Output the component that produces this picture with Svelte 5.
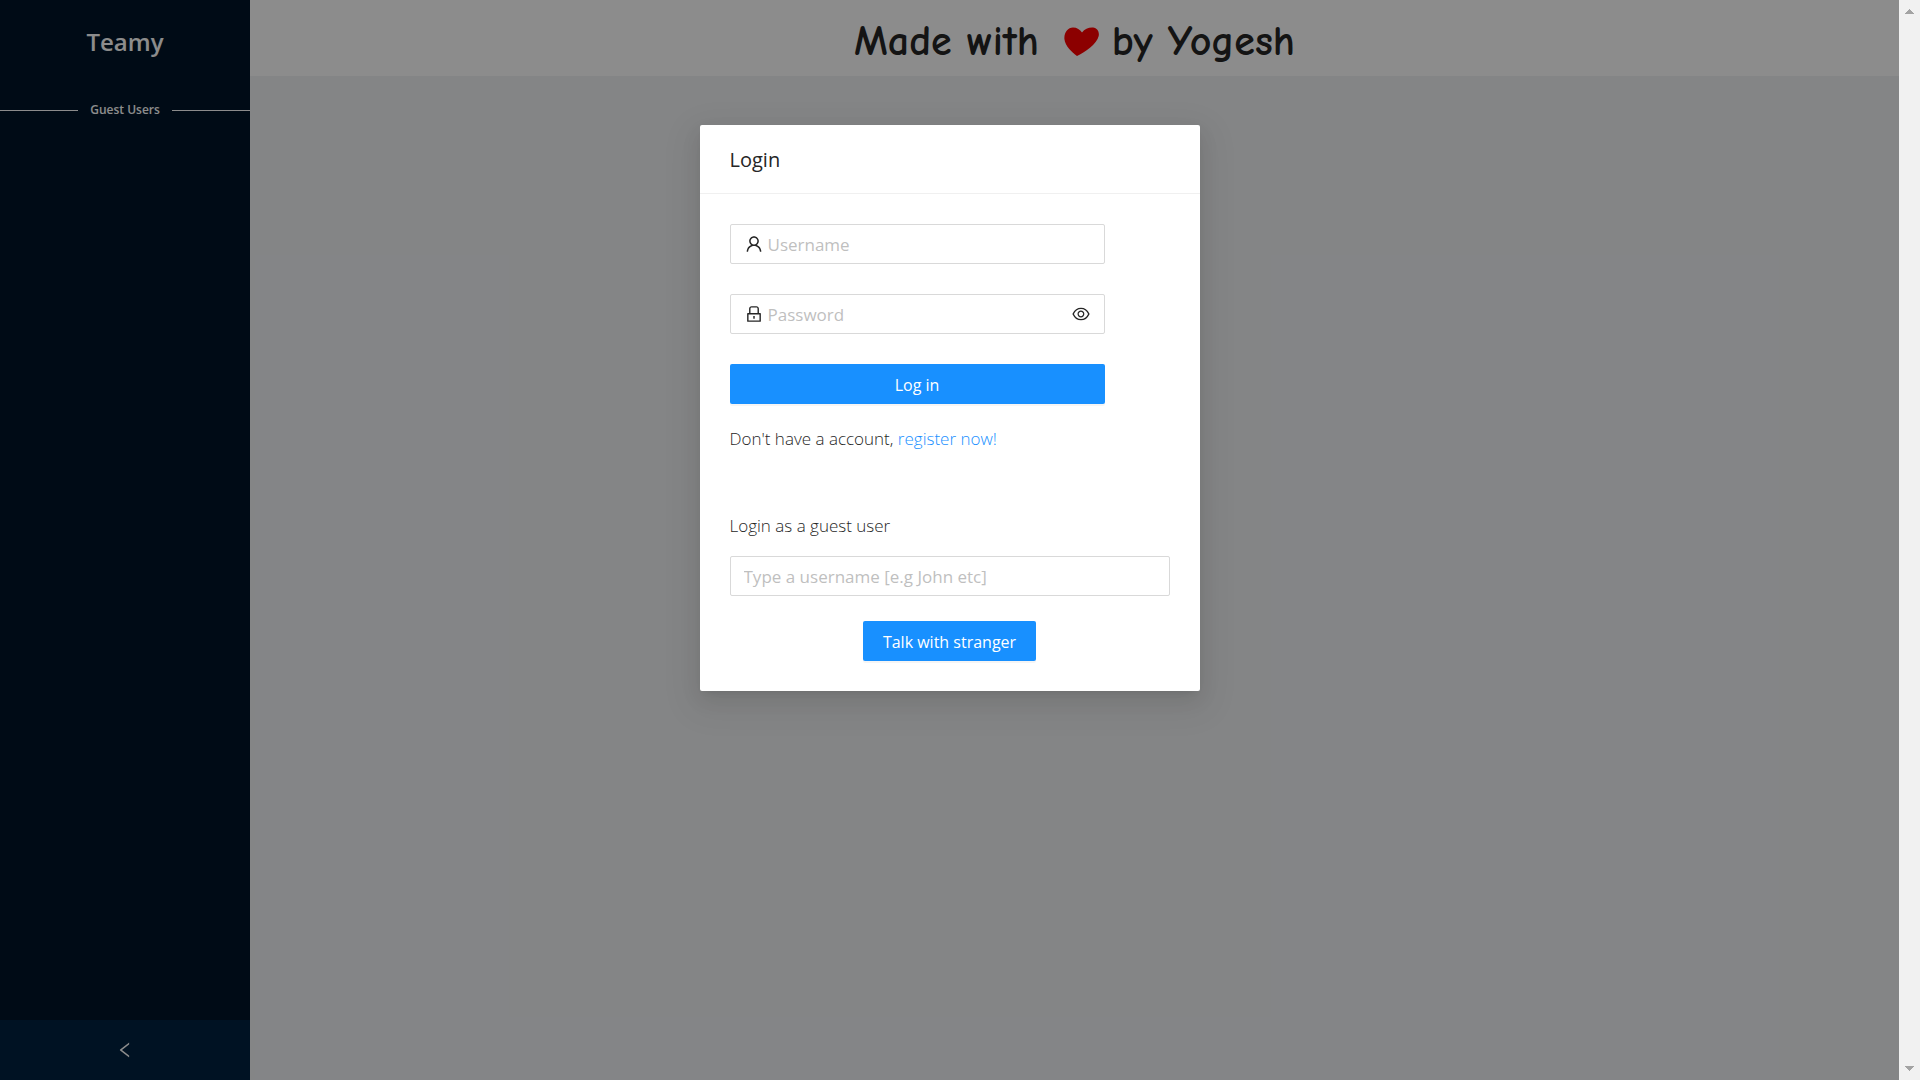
<script>
  let username = $state('');
  let password = $state('');
  let guest = $state('');
  let showPassword = $state(false);
</script>

<div class="screen">
  <div class="viewport">
    <aside class="sider">
      <h1 class="brand">Teamy</h1>
      <div class="divider"><span>Guest Users</span></div>
      <button class="trigger" type="button" aria-label="Collapse sidebar">
        <svg class="icon" viewBox="0 0 1024 1024" aria-hidden="true">
          <path d="M724 218.3V141c0-6.7-7.7-10.4-12.9-6.3L260.3 486.8a31.86 31.86 0 000 50.3l450.8 352.1c5.3 4.1 12.9.4 12.9-6.3v-77.3c0-4.9-2.3-9.6-6.1-12.6l-360-281 360-281.1c3.8-3 6.1-7.7 6.1-12.6z" />
        </svg>
      </button>
    </aside>
    <main class="content">
      <header class="topbar">
        <span>Made with</span>
        <svg class="heart" viewBox="0 0 35 29" aria-label="love" role="img">
          <path d="M13 29C8 25 1 19 .4 12C0 5 4 .6 9 .5C13 .5 16 2.500 18 5.500C20.500 2 25 .3 29 .6C33.500 1 35.500 5 34.700 9C33 17 20.500 25.500 13 29Z" />
        </svg>
        <span>by Yogesh</span>
      </header>
    </main>

    <div class="mask">
      <section class="modal" role="dialog" aria-labelledby="login-title">
        <h2 class="modal-title" id="login-title">Login</h2>
        <div class="modal-body">
          <form class="login">
            <label class="field">
              <svg class="icon" viewBox="0 0 1024 1024" aria-hidden="true">
                <path d="M858.5 763.6a374 374 0 00-80.6-119.5 375.63 375.63 0 00-119.5-80.6c-.4-.2-.8-.3-1.2-.5C719.5 518 760 444.7 760 362c0-137-111-248-248-248S264 225 264 362c0 82.7 40.5 156 102.8 201.1-.4.2-.8.3-1.2.5-44.8 18.9-85 46-119.5 80.6a375.63 375.63 0 00-80.6 119.5A371.7 371.7 0 00136 901.8a8 8 0 008 8.200h60c4.400 0 7.900-3.500 8-7.800 2-77.200 33-149.500 87.800-204.300 56.700-56.700 132-87.900 212.200-87.900s155.500 31.200 212.200 87.900C779 752.700 810 825 812 902.200c.1 4.400 3.600 7.800 8 7.800h60a8 8 0 008-8.200c-1-47.800-10.900-94.300-29.500-138.200zM512 534c-45.900 0-89.100-17.900-121.600-50.400S340 407.900 340 362c0-45.900 17.900-89.100 50.400-121.600S466.100 190 512 190s89.100 17.900 121.600 50.400S684 316.100 684 362c0 45.900-17.900 89.100-50.400 121.600S557.900 534 512 534z" />
              </svg>
              <input type="text" placeholder="Username" aria-label="Username" bind:value={username} />
            </label>
            <div class="field">
              <svg class="icon" viewBox="0 0 1024 1024" aria-hidden="true">
                <path d="M832 464h-68V240c0-70.7-57.3-128-128-128H388c-70.7 0-128 57.3-128 128v224h-68c-17.7 0-32 14.3-32 32v384c0 17.7 14.3 32 32 32h640c17.7 0 32-14.3 32-32V496c0-17.7-14.3-32-32-32zM332 240c0-30.9 25.1-56 56-56h248c30.9 0 56 25.1 56 56v224H332V240zm460 600H232V536h560v304zM484 701v53c0 4.4 3.6 8 8 8h40c4.4 0 8-3.6 8-8v-53a48.01 48.01 0 10-56 0z" />
              </svg>
              <input type={showPassword ? 'text' : 'password'} placeholder="Password" aria-label="Password" bind:value={password} />
              <button class="reveal" type="button" aria-label="Show password" onclick={() => (showPassword = !showPassword)}>
                <svg class="icon" viewBox="0 0 1024 1024" aria-hidden="true">
                  <path d="M942.2 486.2C847.4 286.5 704.1 186 512 186c-192.2 0-335.4 100.5-430.2 300.3a60.3 60.3 0 000 51.5C176.6 737.5 319.9 838 512 838c192.2 0 335.4-100.5 430.2-300.3 7.7-16.2 7.7-35 0-51.5zM512 766c-161.3 0-279.4-81.8-362.7-254C232.6 339.8 350.7 258 512 258c161.3 0 279.4 81.8 362.7 254C791.5 684.2 673.4 766 512 766zm-4-430c-97.2 0-176 78.8-176 176s78.8 176 176 176 176-78.8 176-176-78.8-176-176-176zm0 288c-61.9 0-112-50.1-112-112s50.1-112 112-112 112 50.1 112 112-50.1 112-112 112z" />
                </svg>
              </button>
            </div>
            <button class="primary" type="button">Log in</button>
          </form>
          <p class="register">Don't have a account, <a href="#register">register now!</a></p>
          <form class="guest">
            <label for="guest-name">Login as a guest user</label>
            <div class="field">
              <input id="guest-name" type="text" placeholder="Type a username [e.g John etc]" bind:value={guest} />
            </div>
            <button class="primary" type="button">Talk with stranger</button>
          </form>
        </div>
      </section>
    </div>
  </div>

  <div class="scrollbar" aria-hidden="true">
    <svg viewBox="0 0 9 5"><path d="M4 0h1v1h1v1h1v1h1v1h1v1H0V4h1V3h1V2h1V1h1z" /></svg>
    <svg viewBox="0 0 9 5"><path d="M0 0h9v1H8v1H7v1H6v1H5v1H4V4H3V3H2V2H1V1H0z" /></svg>
  </div>
</div>

<style>
  :global(body) {
    margin: 0;
  }

  .screen {
    display: grid;
    grid-template-columns: minmax(0, 1fr) 21px;
    min-height: 100vh;
    font-family: 'Segoe UI', 'Open Sans', 'Noto Sans', sans-serif;
    font-size: 17px;
    font-weight: 300;
    line-height: 28px;
    color: #262626;
  }

  .screen :is(h1, h2, p) {
    margin: 0;
  }

  .viewport {
    position: relative;
    display: grid;
    grid-template-columns: 250px minmax(0, 1fr);
  }

  .sider {
    display: flex;
    flex-direction: column;
    background: #001529;
    color: #fff;
  }

  .brand {
    padding: 22px 0;
    font-size: 24px;
    line-height: 40px;
    font-weight: 600;
    text-align: center;
  }

  .divider {
    display: flex;
    align-items: center;
    gap: 12px;
    padding-top: 16px;
    font-size: 12px;
    line-height: 20px;
    font-weight: 600;
  }

  .divider::before,
  .divider::after {
    content: '';
    flex: 1;
    height: 1px;
    background: #fff;
  }

  .trigger {
    display: grid;
    place-items: center;
    height: 60px;
    margin-top: auto;
    padding: 0;
    border: 0;
    background: #002140;
    color: #fff;
  }

  .content {
    background: #f0f2f5;
  }

  .topbar {
    display: flex;
    align-items: center;
    justify-content: center;
    box-sizing: border-box;
    height: 76px;
    padding-top: 7px;
    background: #fff;
    font-family: 'Comic Sans MS', 'Comic Neue', 'Open Sans', sans-serif;
    font-size: 42px;
    line-height: 70px;
    font-weight: 700;
  }

  .heart {
    width: 35px;
    height: 29px;
    margin: 0 13px 0 25px;
    fill: #f00;
  }

  .icon {
    display: block;
    flex: none;
    width: 20px;
    height: 20px;
    fill: currentColor;
  }

  .mask {
    position: absolute;
    inset: 0;
    display: flex;
    align-items: flex-start;
    justify-content: center;
    padding-top: 125px;
    background: rgba(0, 0, 0, 0.45);
  }

  .modal {
    width: 500px;
    border-radius: 2px;
    background: #fff;
    box-shadow:
      0 4px 8px -5px rgba(0, 0, 0, 0.12),
      0 8px 20px rgba(0, 0, 0, 0.08),
      0 11px 35px 10px rgba(0, 0, 0, 0.05);
  }

  .modal-title {
    padding: 21px 30px 19px;
    border-bottom: 1px solid #f0f0f0;
    font-size: 20px;
    line-height: 28px;
    font-weight: 400;
  }

  .modal-body {
    padding: 30px;
  }

  .login {
    display: flex;
    flex-direction: column;
    gap: 30px;
    max-width: 375px;
  }

  .field {
    display: flex;
    align-items: center;
    gap: 4px;
    box-sizing: border-box;
    height: 40px;
    padding: 0 13px;
    border: 1px solid #d9d9d9;
    border-radius: 2px;
    background: #fff;
  }

  .field input {
    flex: 1;
    min-width: 0;
    padding: 2px 0 0;
    border: 0;
    outline: 0;
    background: none;
    color: inherit;
    font: inherit;
    font-weight: 400;
  }

  .field input::placeholder {
    color: #bfbfbf;
  }

  .reveal {
    padding: 0;
    border: 0;
    background: none;
    color: inherit;
  }

  .primary {
    height: 40px;
    padding: 2px 20px 0;
    border: 0;
    border-radius: 2px;
    background: #1890ff;
    box-shadow: 0 2px 0 rgba(0, 0, 0, 0.04);
    color: #fff;
    font: inherit;
    font-size: 16px;
    font-weight: 400;
  }

  .register {
    padding: 21px 0 59px;
  }

  .register a {
    color: #1890ff;
    text-decoration: none;
  }

  .guest {
    display: flex;
    flex-direction: column;
  }

  .guest .field {
    margin: 16px 0 25px;
  }

  .guest .primary {
    align-self: center;
  }

  .scrollbar {
    display: flex;
    flex-direction: column;
    align-items: center;
    justify-content: space-between;
    box-sizing: border-box;
    padding: 9px 0;
    background: #f1f1f1;
  }

  .scrollbar svg {
    width: 9px;
    height: 5px;
    fill: #a3a3a3;
  }
</style>
